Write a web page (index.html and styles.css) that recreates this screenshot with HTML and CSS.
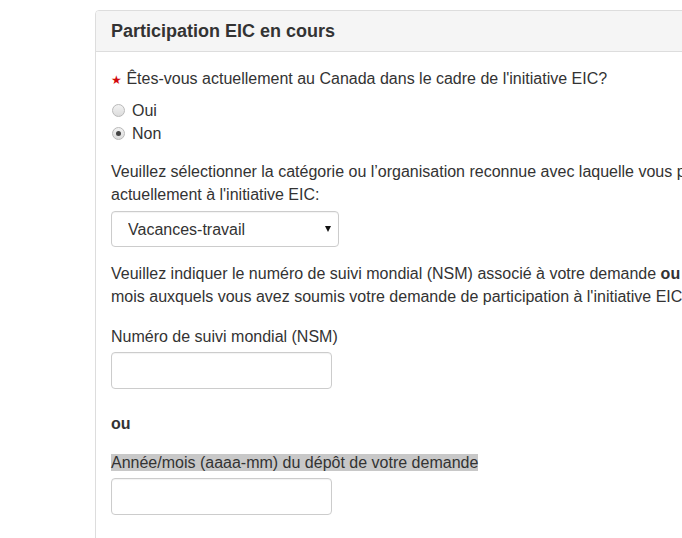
FILE: index.html
```html
<!DOCTYPE html>
<html lang="fr">

<head>
    <meta charset="utf-8">
    <title>Participation EIC en cours</title>
    <link rel="stylesheet" href="styles.css">
</head>

<body>
    <div class="page">
        <section class="panel">
            <div class="panel-heading">
                <h3>Participation EIC en cours</h3>
            </div>
            <div class="panel-body">
                <p class="question"><span class="required">★</span> Êtes-vous actuellement au Canada dans le cadre de l'initiative EIC?</p>
                <div class="radios">
                    <label class="radio"><input type="radio" name="eic"> Oui</label>
                    <label class="radio"><input type="radio" name="eic" checked> Non</label>
                </div>
                <p class="para">Veuillez sélectionner la catégorie ou l’organisation reconnue avec laquelle vous participez<br>actuellement à l'initiative EIC:</p>
                <div class="select-wrap">
                    <select class="control">
                        <option>Vacances-travail</option>
                    </select>
                </div>
                <p class="para">Veuillez indiquer le numéro de suivi mondial (NSM) associé à votre demande <b>ou</b> l'année et le<br>mois auxquels vous avez soumis votre demande de participation à l'initiative EIC.</p>
                <label class="field-label">Numéro de suivi mondial (NSM)</label>
                <input class="control text" type="text">
                <p class="or">ou</p>
                <label class="field-label second"><span class="marked">Année/mois (aaaa-mm) du dépôt de votre demande</span></label>
                <input class="control text" type="text">
            </div>
        </section>
    </div>
</body>

</html>
```

FILE: styles.css
```css
html {
    overflow: hidden;
}

body {
    margin: 0;
    padding: 0;
    background: #fff;
    color: #333;
    font-family: "Liberation Sans", Arial, sans-serif;
    font-size: 16px;
    line-height: 23px;
}

.page {
    padding: 10px 0 0 95px;
}

.panel {
    width: 900px;
    height: 600px;
    border: 1px solid #ddd;
    border-radius: 4px;
}

.panel-heading {
    background: #f5f5f5;
    border-bottom: 1px solid #ddd;
    border-radius: 3px 3px 0 0;
    padding: 10px 15px;
}

.panel-heading h3 {
    margin: 0;
    font-size: 18px;
    line-height: 20px;
    font-weight: bold;
}

.panel-body {
    padding: 15px;
    display: flex;
    flex-direction: column;
    align-items: flex-start;
}

.panel-body p {
    margin: 0;
}

.required {
    color: #d3080c;
    font-size: 12px;
}

.radios {
    margin-top: 7px;
    display: flex;
    flex-direction: column;
}

.radio {
    display: flex;
    align-items: center;
    gap: 7px;
}

.radio input {
    appearance: none;
    -webkit-appearance: none;
    margin: 0 0 0 1px;
    width: 13px;
    height: 13px;
    border: 1px solid #b9b9b9;
    border-radius: 50%;
    background: linear-gradient(#f2f2f2, #dcdcdc);
    box-sizing: border-box;
    display: grid;
    place-content: center;
}

.radio input:checked::before {
    content: "";
    width: 5px;
    height: 5px;
    border-radius: 50%;
    background: #444;
}

.para {
    margin-top: 15px !important;
}

.select-wrap {
    position: relative;
    margin-top: 5px;
}

.select-wrap::after {
    content: "";
    position: absolute;
    right: 8px;
    top: 15px;
    border-left: 3px solid transparent;
    border-right: 3px solid transparent;
    border-top: 6px solid #111;
}

.control {
    font-family: inherit;
    font-size: 16px;
    color: #333;
    border: 1px solid #ccc;
    border-radius: 4px;
    background: #fff;
    box-sizing: border-box;
    box-shadow: inset 0 1px 1px rgba(0, 0, 0, 0.05);
}

select.control {
    appearance: none;
    -webkit-appearance: none;
    width: 228px;
    height: 36px;
    padding: 0 20px 0 16px;
}

.text {
    width: 221px;
    height: 37px;
    margin: 4px 0 0;
    padding: 6px 12px;
}

.field-label {
    margin-top: 17px;
}

.field-label.second {
    margin-top: 16px;
}

.or {
    margin-top: 23px !important;
    font-weight: bold;
}

.marked {
    background: #c8c8c8;
}
```
